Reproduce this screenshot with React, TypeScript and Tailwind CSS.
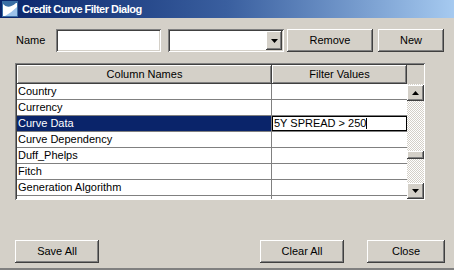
import React from 'react';

const raised =
  'bg-[#d4d0c8] shadow-[inset_-1px_-1px_#404040,inset_1px_1px_#ffffff,inset_-2px_-2px_#808080,inset_2px_2px_#d4d0c8]';
const sunken =
  'bg-white shadow-[inset_1px_1px_#808080,inset_-1px_-1px_#ffffff,inset_2px_2px_#404040,inset_-2px_-2px_#d4d0c8]';

const rows = [
  'Country',
  'Currency',
  'Curve Data',
  'Curve Dependency',
  'Duff_Phelps',
  'Fitch',
  'Generation Algorithm',
  '',
];

function Button({ label, w }: { label: string; w: string }) {
  return (
    <button className={`${raised} ${w} h-[23px] flex items-center justify-center text-[11px] text-black`}>
      {label}
    </button>
  );
}

function Arrow({ up }: { up?: boolean }) {
  return (
    <svg width="7" height="4" viewBox="0 0 7 4">
      <path d={up ? 'M3.5 0 L7 4 L0 4 Z' : 'M0 0 L7 0 L3.5 4 Z'} fill="#000" />
    </svg>
  );
}

function TitleIcon() {
  return (
    <svg width="16" height="16" viewBox="0 0 16 16">
      <rect x="0" y="0" width="16" height="16" fill="#3a6ea5" />
      <path d="M1 15 L1 3 Q6 9 14 2 L15 2 L15 15 Z" fill="#ffffff" />
      <path d="M3 15 Q9 12 15 6 L15 15 Z" fill="#9cc2ea" />
    </svg>
  );
}

export default function App() {
  return (
    <div className="w-[454px] h-[270px] bg-[#d4d0c8] flex flex-col font-['Liberation_Sans',Arial,sans-serif] text-[11px] text-black border-b-2 border-[#808080] overflow-hidden">
      <div className="h-[18px] flex items-center gap-[4px] pl-[2px] bg-linear-to-r from-[#0a246a] via-[#3a5f9f] to-[#a6caf0]">
        <TitleIcon />
        <span className="text-white font-bold text-[11px] tracking-[-0.5px] leading-none">Credit Curve Filter Dialog</span>
      </div>

      <div className="flex items-center mt-[11px] pl-[16px]">
        <span className="w-[40px]">Name</span>
        <div className={`${sunken} w-[105px] h-[23px]`} />
        <div className={`${sunken} w-[116px] h-[23px] ml-[7px] flex justify-end items-center pr-[2px]`}>
          <div className={`${raised} w-[16px] h-[19px] flex items-center justify-center`}>
            <Arrow />
          </div>
        </div>
        <div className="ml-[3px]">
          <Button label="Remove" w="w-[86px]" />
        </div>
        <div className="ml-[5px]">
          <Button label="New" w="w-[66px]" />
        </div>
      </div>

      <div className="ml-[15px] mt-[11px] w-[410px] h-[137px] p-[1px] bg-white shadow-[inset_1px_1px_#808080,inset_-1px_-1px_#ffffff] flex">
        <div className="flex-1 flex flex-col overflow-hidden border-l border-t border-[#404040]">
          <div className="flex h-[19px] bg-[#d4d0c8] shrink-0">
            <div className={`${raised} w-[255px] flex items-center justify-center`}>Column Names</div>
            <div className={`${raised} w-[135px] flex items-center justify-center`}>Filter Values</div>
            <div className="flex-1 bg-[#d4d0c8]" />
          </div>
          <div className="flex flex-1 overflow-hidden">
            <div className="w-[390px] flex flex-col overflow-hidden">
              {rows.map((r) => {
                const sel = r === 'Curve Data';
                return (
                  <div key={r || 'blank'} className="flex h-[16px] shrink-0">
                    <div
                      className={`w-[255px] border-r border-b border-[#808080] pl-[1px] leading-[15px] whitespace-nowrap ${
                        sel ? 'bg-[#0a246a] text-white' : 'bg-white'
                      }`}
                    >
                      {r}
                    </div>
                    <div className="w-[135px] border-b border-[#808080] bg-white">
                      {sel && (
                        <div className="h-full border border-black pl-[1px] leading-[13px] flex items-center">
                          5Y SPREAD &gt; 250<span className="inline-block w-px h-[11px] bg-black" />
                        </div>
                      )}
                    </div>
                  </div>
                );
              })}
            </div>
            <div className="w-[17px] flex flex-col bg-[repeating-conic-gradient(#d4d0c8_0%_25%,#ffffff_0%_50%)] bg-[length:2px_2px] pt-[1px]">
              <div className={`${raised} h-[16px] flex items-center justify-center shrink-0`}>
                <Arrow up />
              </div>
              <div className="h-[50px] shrink-0" />
              <div className={`${raised} h-[8px] shrink-0`} />
              <div className="flex-1" />
              <div className={`${raised} h-[16px] flex items-center justify-center shrink-0`}>
                <Arrow />
              </div>
            </div>
          </div>
        </div>
      </div>

      <div className="flex items-center mt-[40px] pl-[15px]">
        <Button label="Save All" w="w-[84px]" />
        <div className="ml-[161px]">
          <Button label="Clear All" w="w-[84px]" />
        </div>
        <div className="ml-[23px]">
          <Button label="Close" w="w-[78px]" />
        </div>
      </div>
    </div>
  );
}
